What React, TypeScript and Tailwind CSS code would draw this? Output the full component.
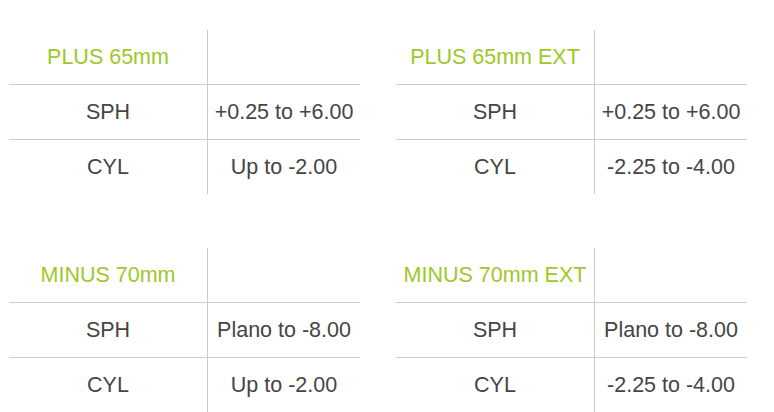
import React from "react"

interface Spec {
  title: string
  sph: string
  cyl: string
}

const specs: Spec[] = [
  { title: "PLUS 65mm", sph: "+0.25 to +6.00", cyl: "Up to -2.00" },
  { title: "PLUS 65mm EXT", sph: "+0.25 to +6.00", cyl: "-2.25 to -4.00" },
  { title: "MINUS 70mm", sph: "Plano to -8.00", cyl: "Up to -2.00" },
  { title: "MINUS 70mm EXT", sph: "Plano to -8.00", cyl: "-2.25 to -4.00" },
]

function SpecTable({ spec }: { spec: Spec }) {
  const rows = [
    ["SPH", spec.sph],
    ["CYL", spec.cyl],
  ]
  return (
    <div className="w-[351px] text-[21.5px] leading-none text-[#454545]">
      <div className="grid h-[54px] grid-cols-[199px_152px]">
        <div className="flex items-center justify-center border-r border-[#cccccc] pt-[2px] text-[#9dc828]">{spec.title}</div>
        <div />
      </div>
      {rows.map(([label, value]) => (
        <div key={label} className="grid h-[55px] grid-cols-[199px_152px] border-t border-[#cccccc]">
          <div className="flex items-center justify-center border-r border-[#cccccc] pt-[2px]">{label}</div>
          <div className="flex items-center justify-center pt-[2px]">{value}</div>
        </div>
      ))}
    </div>
  )
}

export default function App() {
  return (
    <div className="min-h-[412px] w-[774px] bg-white pl-[9px] pt-[30px] font-['Liberation_Sans',Arial,sans-serif]">
      <div className="grid grid-cols-[351px_351px] gap-x-[36px] gap-y-[54px]">
        {specs.map((spec) => (
          <SpecTable key={spec.title} spec={spec} />
        ))}
      </div>
    </div>
  )
}
